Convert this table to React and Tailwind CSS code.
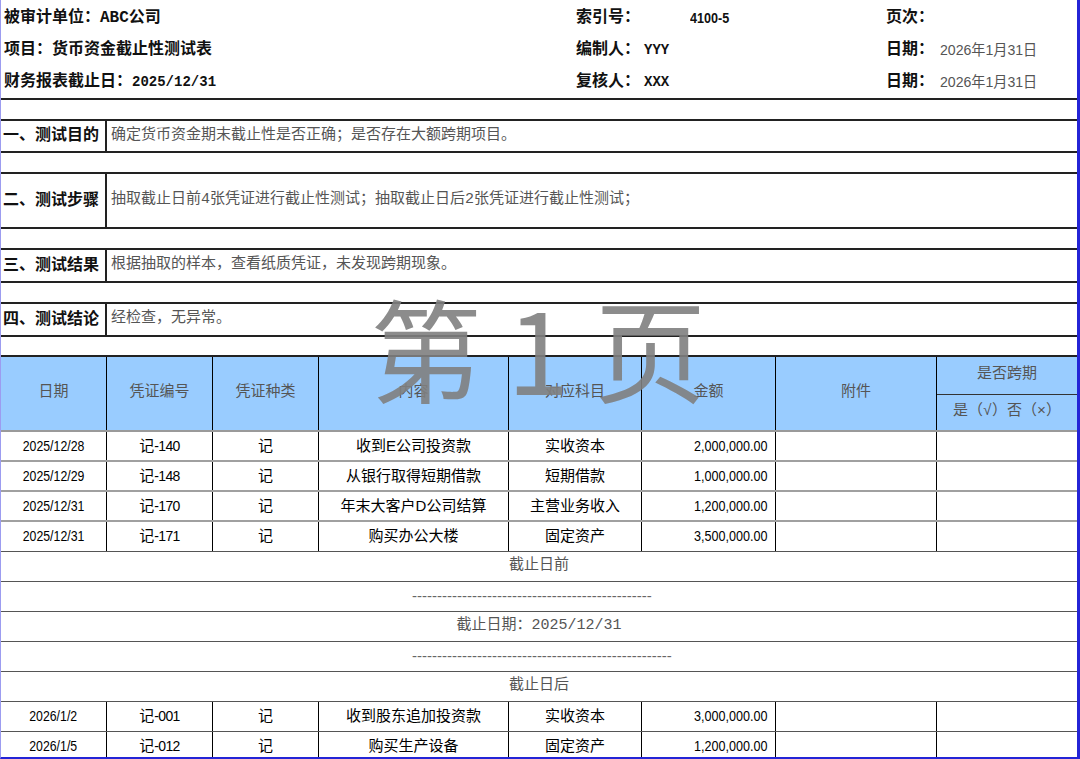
import React from "react";

const SERIF = "font-['Liberation_Mono','Noto_Sans_CJK_SC',monospace]";
const NARROW = "font-['Liberation_Sans_Narrow','Liberation_Sans','Noto_Sans_CJK_SC',sans-serif]";

const sections = [
  { label: "一、测试目的", text: "确定货币资金期末截止性是否正确；是否存在大额跨期项目。", h: "h-[30px]" },
  { label: "二、测试步骤", text: "抽取截止日前4张凭证进行截止性测试；抽取截止日后2张凭证进行截止性测试；", h: "h-[53px]" },
  { label: "三、测试结果", text: "根据抽取的样本，查看纸质凭证，未发现跨期现象。", h: "h-[31px]" },
  { label: "四、测试结论", text: "经检查，无异常。", h: "h-[31px]" },
];

const before = [
  ["2025/12/28", "记-140", "记", "收到E公司投资款", "实收资本", "2,000,000.00"],
  ["2025/12/29", "记-148", "记", "从银行取得短期借款", "短期借款", "1,000,000.00"],
  ["2025/12/31", "记-170", "记", "年末大客户D公司结算", "主营业务收入", "1,200,000.00"],
  ["2025/12/31", "记-171", "记", "购买办公大楼", "固定资产", "3,500,000.00"],
];

const after = [
  ["2026/1/2", "记-001", "记", "收到股东追加投资款", "实收资本", "3,000,000.00"],
  ["2026/1/5", "记-012", "记", "购买生产设备", "固定资产", "1,200,000.00"],
];

const COLS = "grid grid-cols-[106px_106px_106px_190px_133px_134px_161px_1fr]";

function DataRow({ row, line }) {
  return (
    <div className={`${COLS} h-[30px] ${line} ${NARROW} text-[15px] text-black`}>
      <div className="flex items-center justify-center border-r border-black">
        <span className="inline-block scale-x-[0.82]">{row[0]}</span>
      </div>
      <div className="flex items-center justify-center border-r border-black">
        {row[1].slice(0, 1)}
        <span className="inline-block text-[14px] tracking-[-0.6px]">{row[1].slice(1)}</span>
      </div>
      {row.slice(2, 5).map((v, i) => (
        <div key={i} className="flex items-center justify-center border-r border-black">
          {v}
        </div>
      ))}
      <div className="flex items-center justify-end border-r border-black pr-[7px]">
        <span className="inline-block origin-right scale-x-[0.84]">{row[5]}</span>
      </div>
      <div className="border-r border-black" />
      <div />
    </div>
  );
}

function MergedRow({ children, className = "" }) {
  return (
    <div className={`flex h-[30px] items-center border-b border-[#555] text-[15px] text-[#555] ${SERIF} ${className}`}>
      {children}
    </div>
  );
}

export default function App() {
  return (
    <div className="relative h-[759px] w-[1080px] overflow-hidden border-l border-r-[3px] border-b-2 border-l-[#9c9cf0] border-r-[#2424d6] border-b-[#2424d6] bg-white">
      {/* header info */}
      <div className={`grid h-[100px] grid-cols-[575px_114px_196px_54px_1fr] grid-rows-3 border-b-2 border-[#222] pt-[2px] text-[16px] font-bold text-[#111] ${SERIF}`}>
        <div className="flex items-center pl-[3px]">被审计单位：ABC公司</div>
        <div className="flex items-center">索引号：</div>
        <div className={`flex items-center text-[15px] ${NARROW}`}>
          <span className="inline-block origin-left scale-x-[0.84]">4100-5</span>
        </div>
        <div className="flex items-center">页次：</div>
        <div />

        <div className="flex items-center pl-[3px]">项目：货币资金截止性测试表</div>
        <div className="col-span-2 flex items-center">
          编制人：<span className="ml-[4px] text-[14px]">YYY</span>
        </div>
        <div className="flex items-center">日期：</div>
        <div className={`flex items-center text-[15px] font-normal text-[#555] ${NARROW}`}>
          <span className="inline-block origin-left scale-x-[0.94]">2026年1月31日</span>
        </div>

        <div className="flex items-center pl-[3px]">
          财务报表截止日：<span className="text-[14px]">2025/12/31</span>
        </div>
        <div className="col-span-2 flex items-center">
          复核人：<span className="ml-[4px] text-[14px]">XXX</span>
        </div>
        <div className="flex items-center">日期：</div>
        <div className={`flex items-center text-[15px] font-normal text-[#555] ${NARROW}`}>
          <span className="inline-block origin-left scale-x-[0.94]">2026年1月31日</span>
        </div>
      </div>

      {/* test sections */}
      {sections.map((s) => (
        <div key={s.label}>
          <div className="h-[19px]" />
          <div className={`flex ${s.h} box-content border-y-2 border-[#222] ${SERIF}`}>
            <div className="flex w-[106px] shrink-0 items-center border-r-2 border-[#222] pl-[2px] text-[16px] font-bold text-[#111]">
              {s.label}
            </div>
            <div className="flex items-center pl-[4px] text-[15px] text-[#555]">{s.text}</div>
          </div>
        </div>
      ))}
      <div className="h-[18px]" />

      {/* voucher table */}
      <div className="border-t-2 border-[#222]">
        <div className={`${COLS} h-[75px] border-b-2 border-[#9a9a9a] bg-[#99ccff] text-[15px] text-[#555] ${SERIF}`}>
          {["日期", "凭证编号", "凭证种类", "内容", "对应科目", "金额", "附件"].map((h) => (
            <div key={h} className="flex items-center justify-center border-r border-black">
              {h}
            </div>
          ))}
          <div className="flex flex-col">
            <div className="flex h-[38px] items-center justify-center border-b border-[#333]">是否跨期</div>
            <div className="flex flex-1 items-center justify-center">是（√）否（×）</div>
          </div>
        </div>

        {before.map((r, i) => (
          <DataRow key={r[1]} row={r} line={i === before.length - 1 ? "border-b border-[#555]" : "border-b-2 border-[#a0a0a0]"} />
        ))}

        <MergedRow className="justify-center">截止日前</MergedRow>
        <MergedRow className="pl-[411px] font-['Liberation_Sans',sans-serif] text-[12px] text-[#666]">
          {"-".repeat(48)}
        </MergedRow>
        <MergedRow className="justify-center">截止日期：2025/12/31</MergedRow>
        <MergedRow className="pl-[411px] font-['Liberation_Sans',sans-serif] text-[12px] text-[#666]">
          {"-".repeat(52)}
        </MergedRow>
        <MergedRow className="justify-center">截止日后</MergedRow>

        {after.map((r) => (
          <DataRow key={r[1]} row={r} line="border-b border-[#555]" />
        ))}
      </div>

      {/* page watermark */}
      <div className="pointer-events-none absolute left-[369px] top-[290px] whitespace-pre font-['Noto_Sans_CJK_SC',sans-serif] text-[112px] leading-none text-[#808080] opacity-90">
        第 1 页
      </div>
    </div>
  );
}
